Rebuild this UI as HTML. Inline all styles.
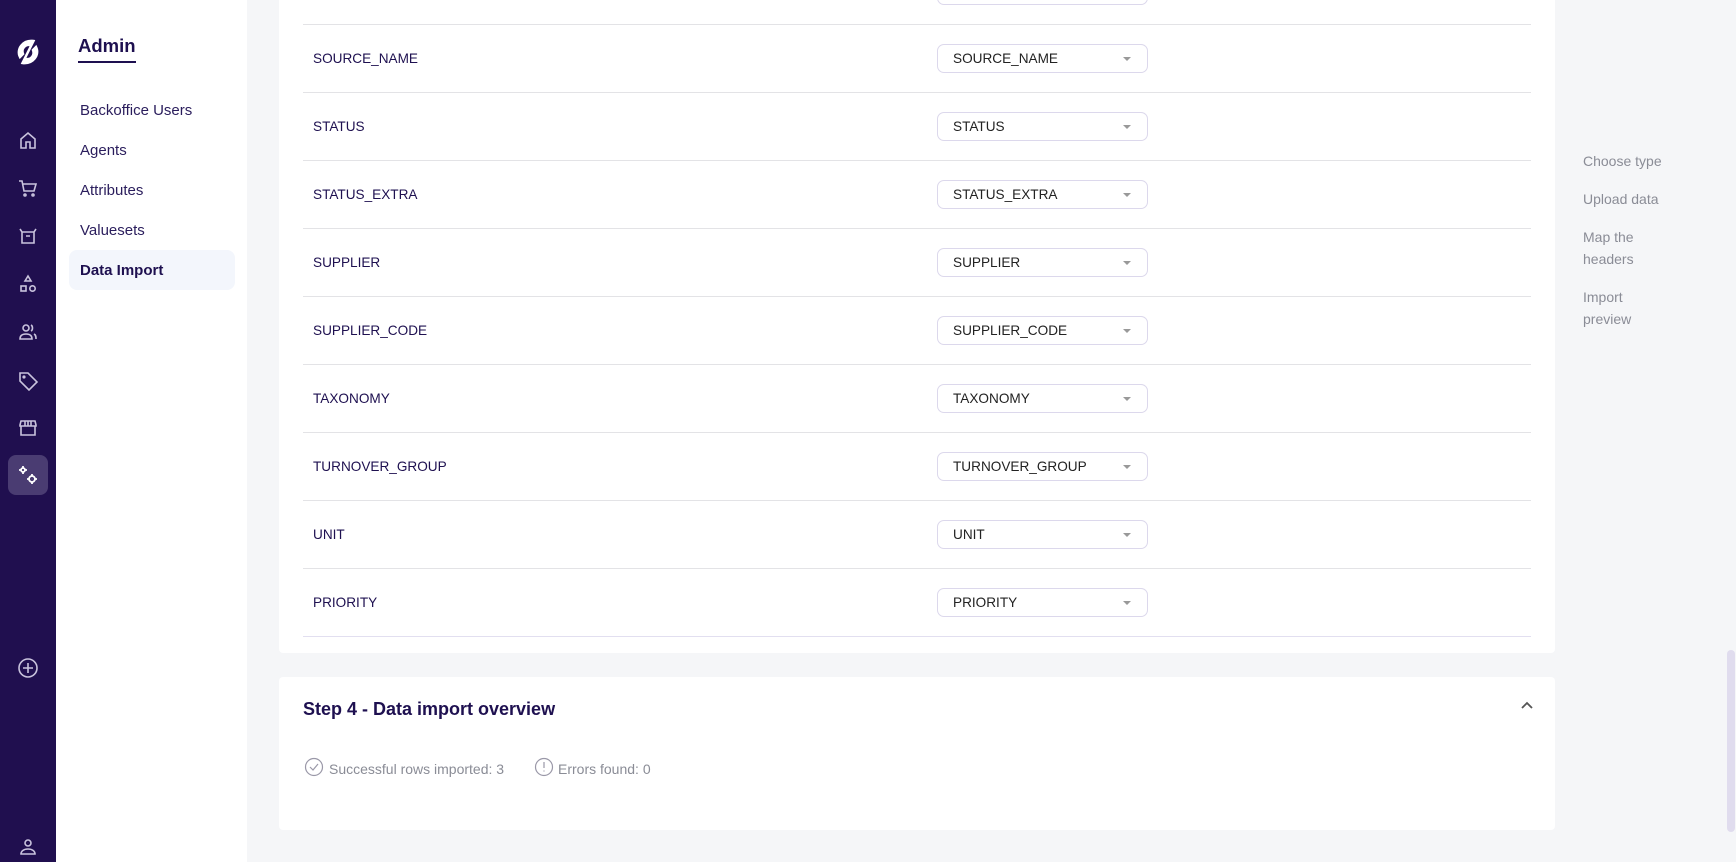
<!DOCTYPE html>
<html><head><meta charset="utf-8"><style>
*{box-sizing:border-box;margin:0;padding:0}
body{width:1736px;height:862px;overflow:hidden;background:#f5f6f8;font-family:"Liberation Sans",sans-serif;position:relative}
.side{position:absolute;left:0;top:0;width:56px;height:862px;background:#200f4f}
.ic{position:absolute;left:16px;width:24px;height:24px}
.sub{position:absolute;left:56px;top:0;width:191px;height:862px;background:#fff}
.admin{position:absolute;left:78px;top:35px;font-size:18.5px;font-weight:bold;color:#1e1050}
.admin:after{content:"";position:absolute;left:0;right:0;bottom:-6px;height:2px;background:#1e1050}
.nav{position:absolute;left:80px;font-size:15px;color:#2a1d5c}
.active{position:absolute;left:69px;top:250px;width:166px;height:40px;background:#f3f6fc;border-radius:8px}
.card{position:absolute;left:279px;width:1276px;background:#fff;border-radius:4px}
.line{position:absolute;left:303px;width:1228px;height:1px;background:#e3e3e6}
.lab{position:absolute;left:313px;font-size:13.6px;color:#1e1050}
.dd{position:absolute;left:937px;width:211px;height:29px;border:1px solid #dcd8ec;border-radius:7px;background:#fff;font-size:13.6px;color:#222;padding-left:15px;line-height:27px}
.dd:after{content:"";position:absolute;right:16px;top:12px;border-left:4px solid transparent;border-right:4px solid transparent;border-top:4px solid #999}
.step{position:absolute;left:1583px;font-size:14px;color:#8a8c96;line-height:22px}
</style></head><body>
<div class="side">
<svg class="ic" style="left:13px;top:37px;width:30px;height:30px" viewBox="0 0 30 30"><path d="M20 4 C10 3 3 12 7 20 L10 17 C8 12 12 7 17 8Z M10 26 C20 27 27 18 23 10 L20 13 C22 18 18 23 13 22Z M21 3 L9 27" fill="#fff" stroke="#fff" stroke-width="2.5"/></svg>
<svg class="ic" style="top:128px" viewBox="0 0 24 24" fill="none" stroke="#c9c3dd" stroke-width="1.6"><path d="M5 11l7-6 7 6v9h-5v-6h-4v6H5z"/></svg>
<svg class="ic" style="top:176px" viewBox="0 0 24 24" fill="none" stroke="#c9c3dd" stroke-width="1.6"><path d="M3 5h3l2 10h10l2-7H7"/><circle cx="9" cy="19" r="1"/><circle cx="17" cy="19" r="1"/></svg>
<svg class="ic" style="top:224px" viewBox="0 0 24 24" fill="none" stroke="#c9c3dd" stroke-width="1.6"><path d="M4 5l2 3h12l2-3M6 8v11h12V8M10 12h4"/></svg>
<svg class="ic" style="top:272px" viewBox="0 0 24 24" fill="none" stroke="#c9c3dd" stroke-width="1.6"><path d="M12 4l3 5H9z"/><rect x="5" y="14" width="5" height="5"/><circle cx="16.5" cy="16.5" r="2.7"/></svg>
<svg class="ic" style="top:320px" viewBox="0 0 24 24" fill="none" stroke="#c9c3dd" stroke-width="1.6"><circle cx="10" cy="8" r="3"/><path d="M4 19c0-4 3-5 6-5s6 1 6 5zM15 5c2 1 2 5 0 6M18 14c2 1 2 3 2 5"/></svg>
<svg class="ic" style="top:369px" viewBox="0 0 24 24" fill="none" stroke="#c9c3dd" stroke-width="1.6"><path d="M4 4h8l9 9-8 8-9-9z"/><circle cx="8" cy="8" r="0.8"/></svg>
<svg class="ic" style="top:416px" viewBox="0 0 24 24" fill="none" stroke="#c9c3dd" stroke-width="1.6"><path d="M4 9l1-4h14l1 4v1H4zM5 10v9h14v-9M9 5v5M12 5v5M15 5v5"/></svg>
<div style="position:absolute;left:8px;top:455px;width:40px;height:40px;border-radius:8px;background:#4a3c72"></div>
<svg class="ic" style="top:463px" viewBox="0 0 24 24" fill="none" stroke="#fff" stroke-width="1.8"><circle cx="7" cy="7" r="2"/><circle cx="16" cy="16" r="3"/><path d="M7 3v1.5M7 9.5V11M3 7h1.5M9.5 7H11M16 11v1.5M16 19.5V21M11 16h1.5M19.5 16H21"/></svg>
<svg class="ic" style="top:656px" viewBox="0 0 24 24" fill="none" stroke="#c9c3dd" stroke-width="1.6"><circle cx="12" cy="12" r="9"/><path d="M12 7v10M7 12h10"/></svg>
<svg class="ic" style="top:835px" viewBox="0 0 24 24" fill="none" stroke="#c9c3dd" stroke-width="1.6"><circle cx="12" cy="8" r="3"/><path d="M5 19c0-3 3-5 7-5s7 2 7 5z"/></svg>
</div>
<div class="sub">
</div>
<div class="admin">Admin</div>
<div class="active"></div>
<div class="nav" style="top:102px">Backoffice Users</div>
<div class="nav" style="top:142px">Agents</div>
<div class="nav" style="top:182px">Attributes</div>
<div class="nav" style="top:222px">Valuesets</div>
<div class="nav" style="top:262px;font-weight:bold;color:#1e1050">Data Import</div>

<div class="card" style="top:-10px;height:663px"></div>
<div class="dd" style="top:-24px"></div>
<div class="line" style="top:24px"></div>
<div class="lab" style="top:51px">SOURCE_NAME</div><div class="dd" style="top:44px">SOURCE_NAME</div>
<div class="line" style="top:92px"></div>
<div class="lab" style="top:119px">STATUS</div><div class="dd" style="top:112px">STATUS</div>
<div class="line" style="top:160px"></div>
<div class="lab" style="top:187px">STATUS_EXTRA</div><div class="dd" style="top:180px">STATUS_EXTRA</div>
<div class="line" style="top:228px"></div>
<div class="lab" style="top:255px">SUPPLIER</div><div class="dd" style="top:248px">SUPPLIER</div>
<div class="line" style="top:296px"></div>
<div class="lab" style="top:323px">SUPPLIER_CODE</div><div class="dd" style="top:316px">SUPPLIER_CODE</div>
<div class="line" style="top:364px"></div>
<div class="lab" style="top:391px">TAXONOMY</div><div class="dd" style="top:384px">TAXONOMY</div>
<div class="line" style="top:432px"></div>
<div class="lab" style="top:459px">TURNOVER_GROUP</div><div class="dd" style="top:452px">TURNOVER_GROUP</div>
<div class="line" style="top:500px"></div>
<div class="lab" style="top:527px">UNIT</div><div class="dd" style="top:520px">UNIT</div>
<div class="line" style="top:568px"></div>
<div class="lab" style="top:595px">PRIORITY</div><div class="dd" style="top:588px">PRIORITY</div>
<div class="line" style="top:636px;background:#e2dff0"></div>

<div class="card" style="top:677px;height:153px"></div>
<div style="position:absolute;left:303px;top:699px;font-size:18px;font-weight:bold;color:#1e1050">Step 4 - Data import overview</div>
<svg style="position:absolute;left:1520px;top:700px" width="14" height="10" viewBox="0 0 14 10" fill="none" stroke="#555" stroke-width="1.8"><path d="M2 8l5-5 5 5"/></svg>
<svg style="position:absolute;left:304px;top:757px" width="20" height="20" viewBox="0 0 20 20" fill="none" stroke="#9a98a8" stroke-width="1.2"><circle cx="10" cy="10" r="8.5"/><path d="M6 10l3 3 5-6"/></svg>
<div style="position:absolute;left:329px;top:761px;font-size:14px;color:#8a8c96">Successful rows imported: 3</div>
<svg style="position:absolute;left:534px;top:757px" width="20" height="20" viewBox="0 0 20 20" fill="none" stroke="#9a98a8" stroke-width="1.2"><circle cx="10" cy="10" r="8.5"/><path d="M10 5v6M10 13.5v1"/></svg>
<div style="position:absolute;left:558px;top:761px;font-size:14px;color:#8a8c96">Errors found: 0</div>

<div class="step" style="top:150px">Choose type</div>
<div class="step" style="top:188px">Upload data</div>
<div class="step" style="top:226px">Map the<br>headers</div>
<div class="step" style="top:286px">Import<br>preview</div>
<div style="position:absolute;left:1727px;top:650px;width:8px;height:182px;border-radius:4px;background:#e0dcee"></div>
</body></html>
